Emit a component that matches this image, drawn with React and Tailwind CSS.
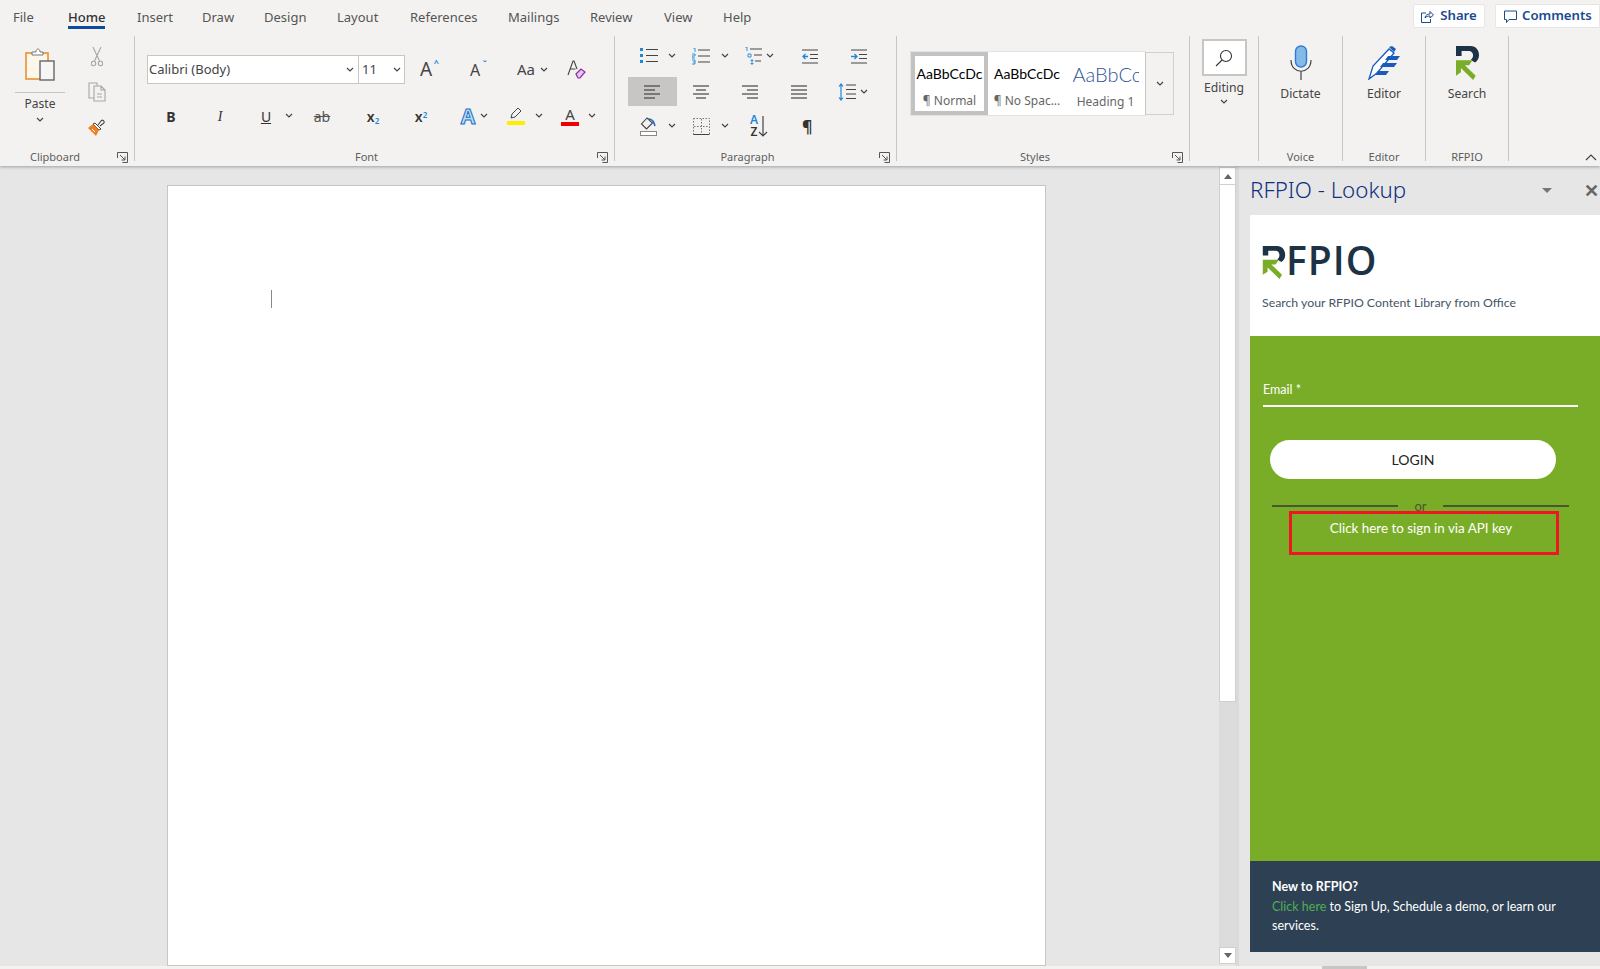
import React from "react";

const Chev = ({ className = "" }) => (
  <svg width="10" height="6" viewBox="0 0 10 6" className={className} fill="none" stroke="#444" strokeWidth="1.2">
    <path d="M2 1l3 3 3-3" />
  </svg>
);

const Launcher = () => (
  <svg width="11" height="11" viewBox="0 0 11 11" fill="none" stroke="#555" strokeWidth="1">
    <path d="M.5 6V.5h10v10H5.5M3 3l5 5M8 4.5V8H4.5" />
  </svg>
);

// list / align icons
const Lines = ({ rows }) => (
  <svg width="18" height="16" viewBox="0 0 18 16" stroke="#444" strokeWidth="1.2">
    {rows.map((r, i) => (
      <line key={i} x1={r[0]} x2={r[1]} y1={2 + i * 4} y2={2 + i * 4} />
    ))}
  </svg>
);

const Bullets = () => (
  <svg width="18" height="16" viewBox="0 0 18 16">
    <path d="M0 0h3v3H0zM0 6h3v3H0zM0 12h3v3H0z" fill="#1e88d8" />
    <path d="M6 1.5h12M6 7.5h12M6 13.5h12" stroke="#444" strokeWidth="1.2" />
  </svg>
);

const Numbers = () => (
  <svg width="18" height="17" viewBox="0 0 18 17">
    <path d="M1 0h2v4M0 6h3v2H0v2h3M0 12h3v4H0M1 14h2" stroke="#1e88d8" fill="none" strokeWidth=".9" />
    <path d="M6 2h12M6 8h12M6 14h12" stroke="#444" strokeWidth="1.2" />
  </svg>
);

const Multi = () => (
  <svg width="18" height="18" viewBox="0 0 18 18">
    <path d="M1 0h2v4M4 7h3v3H4zM7 13h2v1H7zM7 16h2v1H7z" stroke="#1e88d8" fill="none" strokeWidth=".9" />
    <path d="M6 2h12M10 8h8M11 14h6" stroke="#444" strokeWidth="1.2" />
  </svg>
);

const Indent = ({ flip }) => (
  <svg width="16" height="15" viewBox="0 0 16 15">
    <path d="M0 1h16M8 5.5h8M8 9.5h8M0 14h16" stroke="#444" strokeWidth="1.2" />
    {flip ? (
      <path d="M0 7.5h5M3.5 5l2.5 2.5L3.5 10" stroke="#1e88d8" strokeWidth="1.3" fill="none" />
    ) : (
      <path d="M1 7.5h5M3.5 5L1 7.5 3.5 10" stroke="#1e88d8" strokeWidth="1.3" fill="none" />
    )}
  </svg>
);

const LineSpacing = () => (
  <svg width="18" height="18" viewBox="0 0 18 18">
    <path d="M3 1v16M1 3.5L3 1l2 2.5M1 14.5L3 17l2-2.5" stroke="#1e88d8" strokeWidth="1.2" fill="none" />
    <path d="M8 2h10M8 6.500h10M8 11h10M8 15.500h10" stroke="#444" strokeWidth="1.2" />
  </svg>
);

const Shading = () => (
  <svg width="18" height="19" viewBox="0 0 18 19" fill="none">
    <path d="M7 1L1.500 7l5 5 6-6z" stroke="#444" strokeWidth="1.1" />
    <path d="M8 2c3 0 5 1 6 4l1 3" stroke="#1e6fc4" strokeWidth="1.6" />
    <rect x=".5" y="14.500" width="16" height="4" fill="#fff" stroke="#888" />
  </svg>
);

const Borders = () => (
  <svg width="17" height="17" viewBox="0 0 17 17" fill="none" stroke="#777">
    <rect x=".5" y=".5" width="16" height="16" strokeDasharray="1.500 1.500" />
    <path d="M8.500 1v15M1 8.500h15" strokeDasharray="1.500 1.500" />
    <path d="M.5 16.500h16" stroke="#444" />
  </svg>
);

const PasteIcon = () => (
  <svg width="30" height="34" viewBox="0 0 30 34" fill="none">
    <rect x="1" y="6" width="22" height="26" fill="#fdf6ea" stroke="#e8912d" strokeWidth="1.6" />
    <path d="M7 8V5h4c0-4 4-4 4 0h3v3z" fill="#fff" stroke="#777" />
    <rect x="15" y="14" width="14" height="19" fill="#f6f6f6" stroke="#666" strokeWidth="1.4" />
  </svg>
);

const CutIcon = () => (
  <svg width="12" height="20" viewBox="0 0 12 20" fill="none" stroke="#a6a6a6" strokeWidth="1.1">
    <path d="M2 0l6.500 14M10 0L3.500 14" />
    <circle cx="2.500" cy="16.500" r="2.200" />
    <circle cx="9.500" cy="16.500" r="2.200" />
  </svg>
);

const CopyIcon = () => (
  <svg width="18" height="20" viewBox="0 0 18 20" fill="none" stroke="#a6a6a6" strokeWidth="1.1">
    <path d="M6 16H1V1h8v3" />
    <path d="M6 4h7l4 4v11H6zM13 4v4h4M9 12h5M9 15h5" />
  </svg>
);

const BrushIcon = () => (
  <svg width="18" height="18" viewBox="0 0 18 18" fill="none">
    <path d="M10 7l3-4c1-2 4 0 3 2l-4 3" stroke="#444" strokeWidth="1.1" />
    <path d="M7 5l6 6-2 1-6-6z" fill="#fff" stroke="#444" />
    <path d="M5 6L0 10l8 8 3-6z" fill="#f07f20" />
    <path d="M4 11l3 3" stroke="#fff" />
  </svg>
);

const Eraser = () => (
  <svg width="20" height="20" viewBox="0 0 20 20" fill="none">
    <path d="M1 15L6 1h1l3 8M3.500 9h5" stroke="#444" strokeWidth="1.1" />
    <path d="M9 14l5-5 4 3-5 6h-2z" fill="#e6c6ee" stroke="#8a2da8" strokeWidth="1.2" />
  </svg>
);

const MagGlass = () => (
  <svg width="18" height="18" viewBox="0 0 18 18" fill="none" stroke="#333" strokeWidth="1.100">
    <circle cx="11" cy="7" r="5.500" />
    <path d="M7 11l-6 6" />
  </svg>
);

const MicIcon = () => (
  <svg width="22" height="36" viewBox="0 0 22 36" fill="none">
    <rect x="5.500" y="1" width="11" height="21" rx="5.500" fill="#85b9e8" stroke="#2b7cd3" strokeWidth="1.400" />
    <path d="M1 15c0 15 20 15 20 0M11 26v9" stroke="#444" strokeWidth="1.200" />
  </svg>
);

const EditorIcon = () => (
  <svg width="33" height="34" viewBox="0 0 33 34" fill="none">
    <path d="M1 33L5 20 21 3l5 4L9 27z" fill="#fff" stroke="#185abd" strokeWidth="1.300" />
    <path d="M21 1l3-1 4 3-2 3z" fill="#185abd" />
    <path d="M20 10h12l-3 4H17zM15 17h14l-3 4H12zM10 25h11l-3 4H7z" fill="#185abd" />
  </svg>
);

const RMark = ({ className }) => (
  <svg viewBox="0 0 70 103" className={className}>
    <path d="M0 0H45C60 0 70 12 70 28 70 38 65 46 58 50L45 42C50 38 52 34 52 28 52 20 46 15 40 15H17V30H0Z" fill="#1d3345" />
    <path d="M0 43H50L40 58H27L60 90 52 103 15 67V80L0 90Z" fill="#7aad27" />
  </svg>
);

const Group = ({ label, width, launcher, labelPad = "", children }) => (
  <div className={`${width} h-[125px] border-r border-[#c8c6c4] flex flex-col shrink-0`}>
    <div className="flex-1 min-h-0">{children}</div>
    <div className={`relative h-[14px] mb-[-3px] flex items-center justify-center text-[11px] text-[#605e5c] ${labelPad}`}>
      {label}
      {launcher && (
        <span className="absolute right-[6px] top-[2px] flex">
          <Launcher />
        </span>
      )}
    </div>
  </div>
);

const BigTool = ({ icon, label }) => (
  <div className="flex flex-col items-center pt-[9px]">
    <div className="h-[36px] flex items-center justify-center">{icon}</div>
    <div className="mt-[4px] text-[12.2px] text-[#444]">{label}</div>
  </div>
);

const tabs = [
  ["File", "w-[55px]"],
  ["Home", "w-[69px]"],
  ["Insert", "w-[65px]"],
  ["Draw", "w-[62px]"],
  ["Design", "w-[73px]"],
  ["Layout", "w-[73px]"],
  ["References", "w-[98px]"],
  ["Mailings", "w-[82px]"],
  ["Review", "w-[74px]"],
  ["View", "w-[59px]"],
  ["Help", "w-[50px]"],
];

function Ribbon() {
  return (
    <div className="relative z-10 h-[166px] bg-[#f3f2f1] shadow-[0_1px_3px_rgba(0,0,0,0.3)] font-['Noto_Sans',sans-serif]">
      {/* tabs row */}
      <div className="h-[36px] flex justify-between">
        <div className="flex pl-[13px]">
          {tabs.map(([t, w]) => (
            <div key={t} className={`${w} h-[36px] flex items-center text-[13px] ${t === "Home" ? "text-[#333]" : "text-[#555]"}`}>
              <span className={t === "Home" ? "relative font-medium" : ""}>
                {t}
                {t === "Home" && <span className="absolute left-0 right-0 top-[18px] h-[3px] bg-[#0f4a9c]" />}
              </span>
            </div>
          ))}
        </div>
        <div className="flex items-start pt-[4px] gap-[10px] text-[13.2px] font-semibold text-[#1b4a8f]">
          <div className="w-[72px] h-[24px] bg-white border border-[#e8e6e4] rounded-[2px] flex items-center justify-center gap-[6px]">
            <svg width="13" height="13" viewBox="0 0 13 13" fill="none" stroke="#1b4a8f">
              <path d="M5 3H.5v9.500h9V9M4 8c0-3 3-4 5-4V1.500L12.500 5 9 8V6C7 6 5 6.500 4 8z" />
            </svg>
            Share
          </div>
          <div className="w-[105px] h-[24px] bg-white border border-[#e8e6e4] rounded-l-[2px] flex items-center pl-[8px] gap-[5px]">
            <svg width="13" height="13" viewBox="0 0 13 13" fill="none" stroke="#1b4a8f">
              <path d="M.5 1h12v8.500H5L2.500 12.500V9.500h-2z" />
            </svg>
            Comments
          </div>
        </div>
      </div>

      {/* groups */}
      <div className="flex">
        <Group label="Clipboard" width="w-[135px]" launcher labelPad="pr-[24px]">
          <div className="flex">
            <div className="w-[80px] flex flex-col items-center pt-[11px]">
              <PasteIcon />
              <div className="mt-[11px] w-[50px] border-t border-[#c8c6c4]" />
              <div className="mt-[2px] text-[12px] text-[#444]">Paste</div>
              <Chev className="mt-[4px]" />
            </div>
            <div className="w-[34px] flex flex-col items-center pt-[11px]">
              <div className="h-[20px] flex items-center"><CutIcon /></div>
              <div className="h-[20px] mt-[15px] flex items-center"><CopyIcon /></div>
              <div className="h-[18px] mt-[16px] flex items-center"><BrushIcon /></div>
            </div>
          </div>
        </Group>

        <Group label="Font" width="w-[480px]" launcher labelPad="pr-[16px]">
          <div className="pl-[12px] pt-[20px] flex items-center h-[47px]">
            <div className="w-[212px] h-[29px] bg-white border border-[#c8c6c4] flex items-center justify-between pl-[1px] pr-[3px] text-[13px] text-[#444]">
              Calibri (Body)
              <Chev />
            </div>
            <div className="w-[46px] h-[29px] bg-white border border-l-0 border-[#c8c6c4] flex items-center justify-between pl-[3px] pr-[2px] text-[13px] text-[#444]">
              11
              <Chev />
            </div>
            <div className="ml-[11px] w-[20px] text-center text-[19px] leading-none text-[#444] relative">
              A<span className="absolute -right-[3px] -top-[2px] text-[9px] text-[#1e88d8] font-bold">^</span>
            </div>
            <div className="ml-[31px] w-[16px] text-center text-[16px] leading-none text-[#444] relative">
              A<span className="absolute -right-[4px] -top-[3px] text-[9px] text-[#1e88d8] font-bold">ˇ</span>
            </div>
            <div className="ml-[31px] w-[24px] text-center text-[15px] text-[#444]">Aa</div>
            <Chev className="ml-[1px]" />
            <div className="ml-[18px]"><Eraser /></div>
          </div>
          <div className="pl-[25px] mt-[22px] flex items-center h-[22px] text-[#333]">
            <div className="w-[22px] text-center text-[14px] font-bold">B</div>
            <div className="ml-[27px] w-[22px] text-center text-[14px] italic font-['Liberation_Serif',serif]">I</div>
            <div className="ml-[24px] w-[22px] text-center text-[14px] underline">U</div>
            <Chev className="ml-[7px]" />
            <div className="ml-[17px] w-[22px] text-center text-[14px] line-through text-[#555]">ab</div>
            <div className="ml-[28px] w-[24px] text-center text-[14px] font-semibold">x<sub className="text-[8px] text-[#1e88d8]">2</sub></div>
            <div className="ml-[24px] w-[24px] text-center text-[14px] font-semibold">x<sup className="text-[8px] text-[#1e88d8]">2</sup></div>
            <div className="ml-[24px] w-[22px] text-center text-[21px] leading-none font-bold text-[#bcdcf5] [-webkit-text-stroke:1px_#1a6fc4]">A</div>
            <Chev />
            <div className="ml-[16px] w-[22px] flex flex-col items-center">
              <svg width="14" height="14" viewBox="0 0 14 14" fill="none" stroke="#444">
                <path d="M2 11l1-4 6-6 3 3-6 6z" />
              </svg>
              <div className="w-[18px] h-[4px] bg-[#ffee00]" />
            </div>
            <Chev className="ml-[7px]" />
            <div className="ml-[15px] w-[22px] flex flex-col items-center">
              <span className="text-[15px] leading-[15px] text-[#444]">A</span>
              <div className="w-[18px] h-[4px] bg-[#ee0000]" />
            </div>
            <Chev className="ml-[6px]" />
          </div>
        </Group>

        <Group label="Paragraph" width="w-[282px]" launcher labelPad="pr-[16px]">
          <div className="pl-[13px] pt-[11px] flex flex-col">
            <div className="h-[18px] flex items-center">
              <div className="ml-[12px]"><Bullets /></div>
              <Chev className="ml-[9px]" />
              <div className="ml-[15px]"><Numbers /></div>
              <Chev className="ml-[10px]" />
              <div className="ml-[14px]"><Multi /></div>
              <Chev className="ml-[3px]" />
              <div className="ml-[27px]"><Indent /></div>
              <div className="ml-[33px]"><Indent flip /></div>
            </div>
            <div className="mt-[12px] h-[29px] flex items-center">
              <div className="w-[49px] h-[29px] bg-[#c8c6c4] flex items-center justify-center">
                <Lines rows={[[0, 16], [0, 11], [0, 16], [0, 11]]} />
              </div>
              <div className="w-[49px] flex justify-center"><Lines rows={[[0, 16], [3, 13], [0, 16], [3, 13]]} /></div>
              <div className="w-[49px] flex justify-center"><Lines rows={[[0, 16], [5, 16], [0, 16], [5, 16]]} /></div>
              <div className="w-[49px] flex justify-center"><Lines rows={[[0, 16], [0, 16], [0, 16], [0, 16]]} /></div>
              <div className="ml-[14px]"><LineSpacing /></div>
              <Chev className="ml-[3px]" />
            </div>
            <div className="mt-[9px] h-[22px] flex items-center">
              <div className="ml-[12px]"><Shading /></div>
              <Chev className="ml-[9px]" />
              <div className="ml-[16px]"><Borders /></div>
              <Chev className="ml-[10px]" />
              <div className="ml-[20px] w-[26px] flex items-center leading-[12px] text-[12px] font-semibold text-[#333]">
                <div className="flex flex-col items-center">
                  <span className="text-[#1e88d8]">A</span>
                  <span>Z</span>
                </div>
                <svg width="10" height="22" viewBox="0 0 10 22" fill="none" stroke="#444" strokeWidth="1.200">
                  <path d="M5 1v20M1 17l4 4 4-4" />
                </svg>
              </div>
              <div className="ml-[26px] text-[16px] font-bold text-[#333]">¶</div>
            </div>
          </div>
        </Group>

        <Group label="Styles" width="w-[293px]" launcher labelPad="pr-[16px]">
          <div className="pl-[14px] pt-[16px] flex">
            <div className="w-[234px] h-[63px] bg-white flex shadow-[0_0_0_1px_#e4e2e0]">
              <div className="w-[77px] h-[63px] border-[4px] border-[#c2c2c2] flex flex-col items-center pt-[9px] overflow-hidden">
                <span className="text-[14px] leading-[18px] text-black font-['Lato',sans-serif] whitespace-nowrap">AaBbCcDc</span>
                <span className="mt-[10px] text-[12px] leading-[16px] text-[#666]">¶ Normal</span>
              </div>
              <div className="w-[78px] flex flex-col items-center pt-[13px] overflow-hidden">
                <span className="text-[14px] leading-[18px] text-black font-['Lato',sans-serif] whitespace-nowrap">AaBbCcDc</span>
                <span className="mt-[10px] text-[12px] leading-[16px] text-[#666] whitespace-nowrap">¶ No Spac...</span>
              </div>
              <div className="w-[79px] flex flex-col items-center pt-[11px] overflow-hidden">
                <span className="w-[66px] overflow-hidden whitespace-nowrap text-[20px] leading-[23px] text-[#2f5496] font-light font-['Lato',sans-serif]">AaBbCcDc</span>
                <span className="mt-[8px] text-[12px] leading-[16px] text-[#666] whitespace-nowrap">Heading 1</span>
              </div>
            </div>
            <div className="w-[29px] h-[63px] border border-l-[#c8c6c4] border-[#d2d0ce] flex items-center justify-center">
              <Chev />
            </div>
          </div>
        </Group>

        <Group label="" width="w-[69px]">
          <div className="flex flex-col items-center pt-[3px]">
            <div className="w-[45px] h-[37px] bg-white border-2 border-[#c8c6c4] flex items-center justify-center">
              <MagGlass />
            </div>
            <div className="mt-[3px] text-[12.2px] text-[#444]">Editing</div>
            <Chev className="mt-[2px]" />
          </div>
        </Group>

        <Group label="Voice" width="w-[84px]">
          <BigTool icon={<MicIcon />} label="Dictate" />
        </Group>
        <Group label="Editor" width="w-[83px]">
          <BigTool icon={<EditorIcon />} label="Editor" />
        </Group>
        <Group label="RFPIO" width="w-[83px]">
          <BigTool icon={<RMark className="w-[23px] h-[34px]" />} label="Search" />
        </Group>

        <div className="flex-1 flex justify-end items-end pr-[3px]">
          <svg width="12" height="7" viewBox="0 0 12 7" fill="none" stroke="#444" strokeWidth="1.200">
            <path d="M1 6l5-5 5 5" />
          </svg>
        </div>
      </div>
    </div>
  );
}

function Scrollbar() {
  return (
    <div className="w-[17px] shrink-0 mt-[1px] mb-[2px] flex flex-col bg-[#dcdcdc]">
      <div className="h-[18px] bg-white border border-[#d0d0d0] flex items-center justify-center">
        <div className="w-0 h-0 border-x-[4px] border-x-transparent border-b-[5px] border-b-[#666]" />
      </div>
      <div className="h-[517px] bg-white border-x border-b border-[#d0d0d0]" />
      <div className="flex-1" />
      <div className="h-[17px] bg-white border border-[#d0d0d0] flex items-center justify-center">
        <div className="w-0 h-0 border-x-[4px] border-x-transparent border-t-[5px] border-t-[#666]" />
      </div>
    </div>
  );
}

function Panel() {
  return (
    <div className="flex-1 pl-[11px] border-l-[3px] border-[#dadada] font-['Lato',sans-serif]">
      <div className="h-[49px] flex items-center pr-[1px] pb-[1px]">
        <span className="text-[22.3px] leading-none font-light text-[#0f2f7f] font-['Noto_Sans',sans-serif]">RFPIO - Lookup</span>
        <div className="ml-auto w-0 h-0 border-x-[5px] border-x-transparent border-t-[5px] border-t-[#777]" />
        <span className="ml-[32px] text-[18px] font-bold leading-none text-[#666]">✕</span>
      </div>

      <div className="h-[121px] bg-white pl-[12px] pt-[31px]">
        <div className="h-[33px] flex items-start">
          <RMark className="w-[24px] h-[33px]" />
          <span className="text-[39px] leading-[27px] font-semibold tracking-[1px] text-[#1d3345] font-['Open_Sans',sans-serif]">FPIO</span>
        </div>
        <div className="mt-[15px] text-[12.3px] leading-[18px] text-[#455666] whitespace-nowrap">
          Search your RFPIO Content Library from Office
        </div>
      </div>

      <div className="h-[525px] bg-[#7aad27] pt-[45px] flex flex-col items-start">
        <div className="ml-[13px] w-[315px] border-b-2 border-white pb-[6px] text-[12.5px] leading-[18px] text-white">
          Email *
        </div>
        <div className="ml-[20px] mt-[33px] w-[286px] h-[39px] bg-white rounded-full flex items-center justify-center text-[14px] text-[#222]">
          LOGIN
        </div>
        <div className="ml-[22px] mt-[19px] w-[297px] h-[16px] flex items-center text-[13px] text-[#47572f]">
          <div className="flex-1 h-[2px] bg-[#47572f]" />
          <span className="w-[45px] text-center leading-none">or</span>
          <div className="flex-1 h-[2px] bg-[#47572f]" />
        </div>
        <div className="ml-[39px] -mt-[3px] w-[270px] h-[44px] border-[3px] border-[#f01424] flex items-center justify-center pr-[6px] pb-[10px] text-[13.4px] text-white whitespace-nowrap">
          Click here to sign in via API key
        </div>
      </div>

      <div className="h-[91px] bg-[#2e4154] pl-[22px] pt-[16px] text-[12.5px] leading-[19.500px] text-white whitespace-nowrap">
        <div className="font-bold">New to RFPIO?</div>
        <div>
          <span className="text-[#4caf50]">Click here</span> to Sign Up, Schedule a demo, or learn our
          <br />
          services.
        </div>
      </div>
    </div>
  );
}

export default function App() {
  return (
    <div className="w-[1600px] h-[969px] overflow-hidden flex flex-col bg-[#e6e6e6]">
      <Ribbon />
      <div className="flex-1 min-h-0 flex">
        <div className="w-[1219px] shrink-0 pt-[19px] pl-[167px]">
          <div className="w-[879px] h-full bg-white border border-[#c6c6c6] pt-[104px] pl-[103px]">
            <div className="w-px h-[18px] bg-[#888]" />
          </div>
        </div>
        <Scrollbar />
        <Panel />
      </div>
      <div className="h-[3px] shrink-0 bg-[#f3f2f1] pl-[1322px]">
        <div className="w-[45px] h-[3px] bg-[#c8c6c4]" />
      </div>
    </div>
  );
}
